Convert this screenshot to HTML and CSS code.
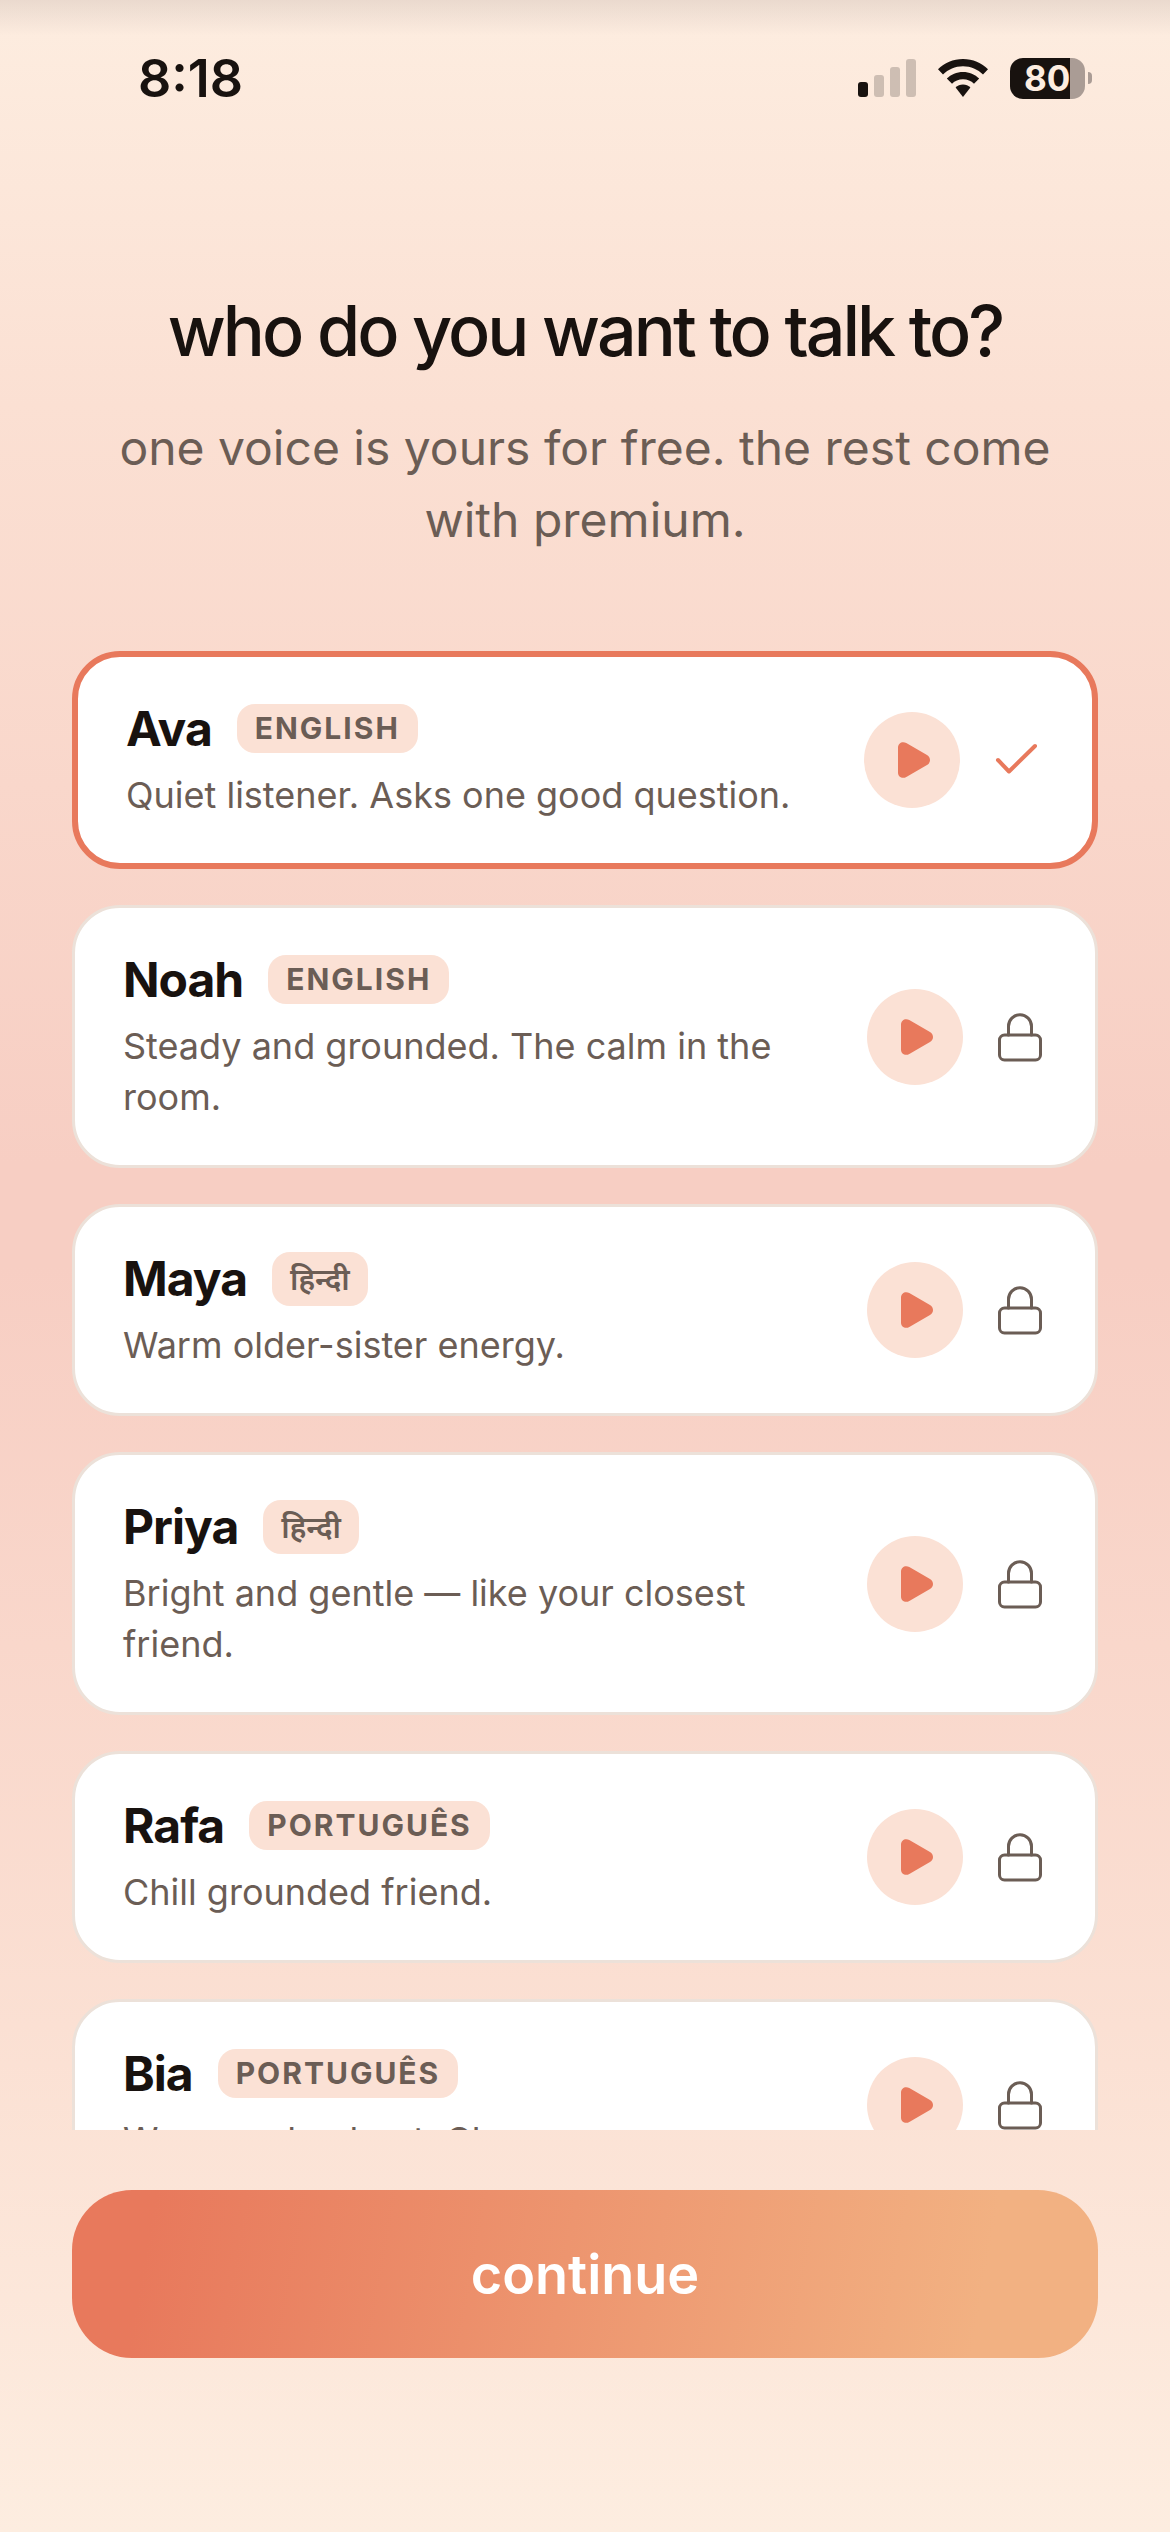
FILE: index.html
```html
<!DOCTYPE html>
<html lang="en">
<head>
  <meta charset="UTF-8" />
  <meta name="viewport" content="width=device-width, initial-scale=1.0" />
  <title>Choose a voice</title>
  <link rel="stylesheet" href="styles.css">
</head>
<body>

<!-- shared icons -->
<svg class="sprite" aria-hidden="true">
  <symbol id="icon-play" viewBox="0 0 32 36">
    <path d="M0 5.5C0 1 4.500 -1.200 8.300 1L29 12.900C33 15.200 33 20.800 29 23.100L8.300 35C4.500 37.200 0 35 0 30.500Z" fill="currentColor"/>
  </symbol>
  <symbol id="icon-lock" viewBox="0 0 54 54">
    <rect x="6.500" y="25" width="41" height="25" rx="5"/>
    <path d="M15.500 25V16.200a11.500 11.500 0 0 1 23 0V25"/>
  </symbol>
  <symbol id="icon-check" viewBox="0 0 54 54">
    <path d="M8 27l11 11.500L45 13"/>
  </symbol>
</svg>

<div class="status-bar">
  <span class="clock">8:18</span>
  <div class="indicators">
    <svg class="signal" viewBox="0 0 58 38" aria-hidden="true">
      <rect x="0" y="23" width="10" height="15" rx="3"/>
      <g opacity="0.2">
        <rect x="16" y="16" width="10" height="22" rx="3"/>
        <rect x="32" y="8" width="10" height="30" rx="3"/>
        <rect x="48" y="0" width="10" height="38" rx="3"/>
      </g>
    </svg>
    <svg class="wifi" viewBox="0 0 50 38" aria-hidden="true">
      <path d="M25 0C34.800 0 43.700 3.900 50 10.300L45 15.500C39.900 10.400 32.800 7.200 25 7.200S10.100 10.400 5 15.500L0 10.300C6.300 3.900 15.200 0 25 0Z"/>
      <path d="M25 13C31.300 13 37 15.500 41.200 19.600L36 24.800C33.200 22 29.300 20.300 25 20.300S16.800 22 14 24.800L8.800 19.600C13 15.500 18.700 13 25 13Z"/>
      <path d="M25 25.500C27.900 25.500 30.500 26.700 32.400 28.600L25 38L17.600 28.600C19.500 26.700 22.100 25.500 25 25.500Z"/>
    </svg>
    <div class="battery"><span class="battery-level">80</span></div>
  </div>
</div>

<header>
  <h1>who do you want to talk to?</h1>
  <p>one voice is yours for free. the rest come with premium.</p>
</header>

<main class="voices">
  <label class="voice">
    <input type="radio" name="voice" value="ava" checked>
    <span class="voice-text">
      <span class="voice-head"><b>Ava</b><span class="lang">ENGLISH</span></span>
      <span class="desc">Quiet listener. Asks one good question.</span>
    </span>
    <button type="button" class="play" aria-label="Play Ava"><svg><use href="#icon-play"/></svg></button>
    <svg class="state"><use href="#icon-check"/></svg>
  </label>

  <label class="voice">
    <input type="radio" name="voice" value="noah">
    <span class="voice-text">
      <span class="voice-head"><b>Noah</b><span class="lang">ENGLISH</span></span>
      <span class="desc">Steady and grounded. The calm in the room.</span>
    </span>
    <button type="button" class="play" aria-label="Play Noah"><svg><use href="#icon-play"/></svg></button>
    <svg class="state"><use href="#icon-lock"/></svg>
  </label>

  <label class="voice">
    <input type="radio" name="voice" value="maya">
    <span class="voice-text">
      <span class="voice-head"><b>Maya</b><span class="lang hindi" lang="hi">हिन्दी</span></span>
      <span class="desc">Warm older-sister energy.</span>
    </span>
    <button type="button" class="play" aria-label="Play Maya"><svg><use href="#icon-play"/></svg></button>
    <svg class="state"><use href="#icon-lock"/></svg>
  </label>

  <label class="voice">
    <input type="radio" name="voice" value="priya">
    <span class="voice-text">
      <span class="voice-head"><b>Priya</b><span class="lang hindi" lang="hi">हिन्दी</span></span>
      <span class="desc">Bright and gentle — like your closest friend.</span>
    </span>
    <button type="button" class="play" aria-label="Play Priya"><svg><use href="#icon-play"/></svg></button>
    <svg class="state"><use href="#icon-lock"/></svg>
  </label>

  <label class="voice">
    <input type="radio" name="voice" value="rafa">
    <span class="voice-text">
      <span class="voice-head"><b>Rafa</b><span class="lang">PORTUGUÊS</span></span>
      <span class="desc">Chill grounded friend.</span>
    </span>
    <button type="button" class="play" aria-label="Play Rafa"><svg><use href="#icon-play"/></svg></button>
    <svg class="state"><use href="#icon-lock"/></svg>
  </label>

  <label class="voice">
    <input type="radio" name="voice" value="bia">
    <span class="voice-text">
      <span class="voice-head"><b>Bia</b><span class="lang">PORTUGUÊS</span></span>
      <span class="desc">Warm and upbeat. Cheery.</span>
    </span>
    <button type="button" class="play" aria-label="Play Bia"><svg><use href="#icon-play"/></svg></button>
    <svg class="state"><use href="#icon-lock"/></svg>
  </label>
</main>

<footer>
  <button type="button" class="continue">continue</button>
</footer>

</body>
</html>
```
FILE: styles.css
```css
* {
  margin: 0;
  padding: 0;
  box-sizing: border-box;
}

body {
  display: flex;
  flex-direction: column;
  height: 100vh;
  font-family: Inter, "Noto Sans", sans-serif;
  color: #18120f;
  background:
    linear-gradient(rgba(120, 100, 100, 0.14), rgba(120, 100, 100, 0) 36px),
    linear-gradient(#fdede0, #fbe0d3 16%, #f7cec3 46%, #f7cec3 50%, #fbe0d3 80%, #fdede0);
}

button {
  border: none;
  font: inherit;
  cursor: pointer;
}

.sprite {
  position: absolute;
  width: 0;
  height: 0;
}

/* status bar */
.status-bar {
  display: flex;
  flex: none;
  align-items: center;
  justify-content: space-between;
  height: 156px;
  padding: 0 78px 0 138px;
}

.clock {
  font-size: 52px;
  font-weight: 600;
}

.indicators {
  display: flex;
  align-items: center;
  gap: 22px;
}

.signal {
  width: 58px;
  height: 38px;
  fill: #18120f;
}

.wifi {
  width: 50px;
  height: 38px;
  fill: #18120f;
}

.battery {
  position: relative;
  width: 75px;
  height: 41px;
  margin-right: 7px;
  border-radius: 13px;
  background: linear-gradient(to right, #18120f 80%, #aa9c95 80%);
}

.battery::after {
  content: "";
  position: absolute;
  top: 14px;
  left: 78px;
  width: 4px;
  height: 12px;
  border-radius: 0 4px 4px 0;
  background: #aa9c95;
}

.battery-level {
  display: block;
  padding-left: 14px;
  color: #fdede0;
  font-size: 35px;
  font-weight: 700;
  line-height: 41px;
}

/* heading */
header {
  flex: none;
  padding: 133px 72px 95px;
  text-align: center;
}

header h1 {
  font-size: 70px;
  font-weight: 550;
  line-height: 84px;
  letter-spacing: -3px;
}

header p {
  margin-top: 39px;
  color: #6b5d55;
  font-size: 48px;
  line-height: 72px;
}

/* voice list */
.voices {
  display: flex;
  flex: 1;
  flex-direction: column;
  gap: 36px;
  min-height: 0;
  padding: 0 72px;
  overflow-y: auto;
  scrollbar-width: none;
}

.voice {
  display: flex;
  flex: none;
  align-items: center;
  padding: 42px 48px;
  border: 3px solid #ece1d9;
  border-radius: 48px;
  background: #fff;
  cursor: pointer;
}

.voice:has(input:checked) {
  border: 6px solid #e8795c;
}

.voice input {
  position: absolute;
  opacity: 0;
}

.voice-text {
  flex: 1;
}

.voice-head {
  display: flex;
  align-items: center;
  gap: 25px;
  height: 59px;
  font-size: 48px;
}

.voice-head b {
  font-weight: 700;
  letter-spacing: -1px;
}

.lang {
  padding: 6px 18px;
  border-radius: 18px;
  background: #fbe1d5;
  color: #6b5d55;
  font-size: 30px;
  font-weight: 700;
  line-height: 37px;
  letter-spacing: 2px;
}

.hindi {
  font-weight: 600;
  line-height: 42px;
  letter-spacing: 0;
}

.desc {
  display: block;
  margin-top: 12px;
  color: #6b5d55;
  font-size: 36px;
  line-height: 51px;
}

.play {
  display: grid;
  place-items: center;
  width: 96px;
  height: 96px;
  margin: 0 30px 0 48px;
  padding-left: 4px;
  border-radius: 50%;
  background: #fbe1d5;
  color: #e8795c;
}

.play svg {
  width: 32px;
  height: 36px;
}

.state {
  width: 54px;
  height: 54px;
  fill: none;
  stroke: #6b5d55;
  stroke-width: 3;
  stroke-linecap: round;
  stroke-linejoin: round;
}

.voice input:checked ~ .state {
  stroke: #e8795c;
  stroke-width: 4;
}

/* bottom action */
footer {
  flex: none;
  padding: 60px 72px 174px;
}

.continue {
  width: 100%;
  height: 168px;
  border-radius: 60px;
  background: linear-gradient(100deg, #e8795c 8%, #f2b182 88%);
  color: #fff;
  font-size: 54px;
  font-weight: 600;
}
```
